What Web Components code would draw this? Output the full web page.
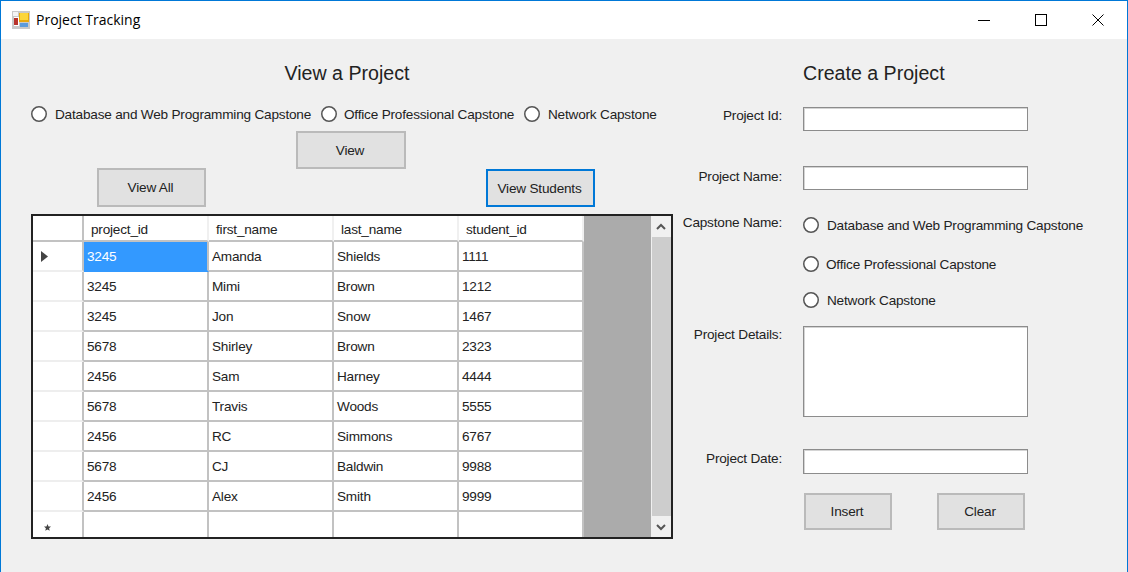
<!DOCTYPE html>
<html>
<head>
<meta charset="utf-8">
<title>Project Tracking</title>
<style>
html, body { margin: 0; height: 100%; overflow: hidden; }
body { font: 13.6px "Liberation Sans", Arial, sans-serif; letter-spacing: -0.2px; color: #222; }
</style>
</head>
<body>
<win-window>
  <win-titlebar slot="title">Project Tracking</win-titlebar>
  <view-panel></view-panel>
  <create-panel></create-panel>
</win-window>

<script>
const define = (name, css, html) => {
  const template = document.createElement('template')
  template.innerHTML = `<style>${css}</style>${html}`
  customElements.define(name, class extends HTMLElement {
    constructor() {
      super()
      this.attachShadow({ mode: 'open' })
      this.shadowRoot.append(template.content.cloneNode(true))
    }
  })
}

define('win-window', `
:host { display: block; height: 572px; box-sizing: border-box; background: #f0f0f0;
  border: 1px solid #0078d7; border-bottom: 0; }
.body { display: flex; align-items: flex-start; }
`, `
<slot name="title"></slot>
<div class="body"><slot></slot></div>
`)

define('win-titlebar', `
:host { display: flex; align-items: center; height: 38px; background: #fff; }
svg { display: block; }
.icon { margin-left: 11px; }
.text { margin-left: 6px; font: 14px "Open Sans", sans-serif; letter-spacing: 0; color: #000; flex: 1; padding-bottom: 1px; }
.btn { width: 57px; display: flex; justify-content: center; }
.btn:last-child { margin-right: 1px; }
`, `
<svg class="icon" width="18" height="18" viewBox="0 0 18 18">
  <rect width="18" height="18" fill="#c9c9c9"/>
  <rect x="1" y="1" width="5" height="4" fill="#f4f4f4"/>
  <rect x="2" y="6" width="5" height="9" fill="#fff"/>
  <rect x="2" y="7" width="4" height="7" fill="#b8332b"/>
  <rect x="7" y="2" width="10" height="9" fill="#e8a90c"/>
  <rect x="8" y="2" width="8" height="7" fill="#fcd63c"/>
  <rect x="8" y="12" width="8" height="4" fill="#5b9bdc"/>
</svg>
<div class="text"><slot></slot></div>
<div class="btn"><svg width="12" height="12"><path d="M0 6.500h12" stroke="#000"/></svg></div>
<div class="btn"><svg width="12" height="12"><rect x=".5" y=".5" width="11" height="11" fill="none" stroke="#000"/></svg></div>
<div class="btn"><svg width="12" height="12"><path d="M.5.5l11 11M11.500.5l-11 11" stroke="#000" fill="none"/></svg></div>
`)

define('win-heading', `
:host { display: block; font: 19.6px/28px "Liberation Sans", sans-serif; letter-spacing: 0; color: #222; }
`, `<slot></slot>`)

define('win-button', `
:host { display: flex; align-items: center; justify-content: center; box-sizing: border-box;
  background: #e1e1e1; border: 2px solid #bababa; padding-right: 2px; color: #222; }
:host([focused]) { border-color: #0078d7; }
`, `<slot></slot>`)

define('win-radio', `
:host { display: flex; align-items: center; height: 20px; white-space: nowrap; }
svg { display: block; flex: none; margin-right: var(--radio-gap, 8px); }
`, `<svg width="16" height="16"><circle cx="8" cy="8" r="7.250" fill="#fff" stroke="#555" stroke-width="1.500"/></svg><slot></slot>`)

define('win-input', `
:host { display: block; width: 225px; height: 24px; }
input { display: block; width: 100%; height: 100%; box-sizing: border-box; margin: 0; padding: 1px;
  border: 1px solid #8c8c8c; box-shadow: inset 1px 1px 0 #d4d4d4; background: #fff; border-radius: 0; outline: 0; }
`, `<input type="text">`)

define('win-memo', `
:host { display: block; width: 225px; height: 91px; }
textarea { display: block; width: 100%; height: 100%; box-sizing: border-box; margin: 0; padding: 1px;
  border: 1px solid #8c8c8c; box-shadow: inset 1px 1px 0 #d4d4d4; background: #fff; border-radius: 0; resize: none; outline: 0; overflow: hidden; }
`, `<textarea></textarea>`)

define('win-field', `
:host { display: grid; grid-template-columns: 108px auto; column-gap: 21px; }
.label { text-align: right; padding-top: var(--label-top, 1px); line-height: 16px; white-space: nowrap; }
`, `<div class="label"><slot name="label"></slot></div><div><slot></slot></div>`)

const columns = ['project_id', 'first_name', 'last_name', 'student_id']
const rows = [
  ['3245', 'Amanda', 'Shields', '1111'],
  ['3245', 'Mimi', 'Brown', '1212'],
  ['3245', 'Jon', 'Snow', '1467'],
  ['5678', 'Shirley', 'Brown', '2323'],
  ['2456', 'Sam', 'Harney', '4444'],
  ['5678', 'Travis', 'Woods', '5555'],
  ['2456', 'RC', 'Simmons', '6767'],
  ['5678', 'CJ', 'Baldwin', '9988'],
  ['2456', 'Alex', 'Smith', '9999'],
]

const arrow = '<svg width="7" height="11"><path d="M0 0l7 5.500-7 5.500z" fill="#444"/></svg>'
const star = '<svg width="7" height="7" viewBox="0 0 7 7"><path d="M3.500 0l1 2.400 2.500.2-1.900 1.700.6 2.500-2.200-1.300L1.300 6.800l.6-2.500L0 2.600l2.500-.2z" fill="#444"/></svg>'
const cell = (text, cls = '') => `<div class="${cls}">${text}</div>`

define('data-grid', `
:host { display: flex; width: 642px; height: 325px; box-sizing: border-box; border: 2px solid #222; background: #ababab; }
.table { display: grid; grid-template-columns: 51px repeat(4, 125px); grid-template-rows: 26px repeat(9, 30px) 25px;
  align-self: flex-start; background: #fff; }
.table > div { box-sizing: border-box; border-right: 2px solid #c2c2c2; border-bottom: 2px solid #c2c2c2;
  padding-left: 3px; line-height: 30px; white-space: nowrap; overflow: hidden; background: #fff; color: #222; }
.table > .head { border-right-color: #f0f0f0; padding-left: 7px; line-height: 27px; }
.table > .side { border-bottom-color: #eee; display: flex; align-items: center; padding: 0 0 0 8px; }
.table > .side.new { align-items: flex-end; padding: 0 0 6px 11px; border-bottom: 0; }
.table > .new-row { border-bottom: 0; }
.table > .corner { border-right-color: #c2c2c2; }
.table > .sel { background: #3399ff; color: #fff; border-bottom-color: #3399ff; }
.gap { width: 67px; }
.scroll { width: 20px; display: flex; flex-direction: column; align-items: center; background: #f0f0f0; }
.scroll svg { display: block; flex: none; margin: 7px 0 6px; }
.thumb { flex: 1; width: 19px; background: #cdcdcd; }
`, `
<div class="table">
  ${cell('', 'head corner')}${columns.map(c => cell(c, 'head')).join('')}
  ${rows.map((r, i) => cell(i ? '' : arrow, 'side') + r.map((v, j) => cell(v, !i && !j ? 'sel' : '')).join('')).join('')}
  ${cell(star, 'side new')}${columns.map(() => cell('', 'new-row')).join('')}
</div>
<div class="gap"></div>
<div class="scroll">
  <svg width="10" height="8"><path d="M1 6l4-4 4 4" fill="none" stroke="#555" stroke-width="2"/></svg>
  <div class="thumb"></div>
  <svg width="10" height="8"><path d="M1 2l4 4 4-4" fill="none" stroke="#555" stroke-width="2"/></svg>
</div>
`)

define('view-panel', `
:host { display: block; width: 673px; flex: none; box-sizing: border-box; padding: 20px 0 0 30px; }
win-heading { width: 632px; text-align: center; }
.radios { display: grid; grid-template-columns: 290px 203px auto; margin-top: 17px; }
.view { width: 110px; height: 38px; margin: 7px 0 0 265px; }
.actions { display: flex; margin: -1px 0 0 66px; }
.all { width: 109px; height: 39px; }
.students { width: 109px; height: 38px; margin: 1px 0 0 280px; }
data-grid { margin-top: 7px; }
`, `
<win-heading>View a Project</win-heading>
<div class="radios">
  <win-radio>Database and Web Programming Capstone</win-radio>
  <win-radio style="--radio-gap:7px">Office Professional Capstone</win-radio>
  <win-radio>Network Capstone</win-radio>
</div>
<win-button class="view">View</win-button>
<div class="actions">
  <win-button class="all">View All</win-button>
  <win-button class="students" focused>View Students</win-button>
</div>
<data-grid></data-grid>
`)

define('create-panel', `
:host { display: block; flex: 1; padding-top: 20px; }
win-heading { margin-left: 129px; }
.id { margin-top: 20px; }
.name { margin-top: 35px; --label-top: 3px; }
.capstone { margin-top: 25px; --label-top: 0px; }
.details { margin-top: 16px; }
.date { margin-top: 32px; --label-top: 2px; }
.date win-input { height: 25px; }
.group win-radio:nth-child(2) { margin-top: 19px; --radio-gap: 7px; }
.group win-radio:nth-child(3) { margin-top: 16px; }
.buttons { display: flex; margin: 19px 0 0 130px; }
.buttons win-button { width: 88px; height: 37px; }
.buttons win-button + win-button { margin-left: 45px; }
`, `
<win-heading>Create a Project</win-heading>
<win-field class="id"><span slot="label">Project Id:</span><win-input></win-input></win-field>
<win-field class="name"><span slot="label">Project Name:</span><win-input></win-input></win-field>
<win-field class="capstone"><span slot="label">Capstone Name:</span>
  <div class="group">
    <win-radio>Database and Web Programming Capstone</win-radio>
    <win-radio>Office Professional Capstone</win-radio>
    <win-radio>Network Capstone</win-radio>
  </div>
</win-field>
<win-field class="details"><span slot="label">Project Details:</span><win-memo></win-memo></win-field>
<win-field class="date"><span slot="label">Project Date:</span><win-input></win-input></win-field>
<div class="buttons">
  <win-button>Insert</win-button>
  <win-button>Clear</win-button>
</div>
`)
</script>
</body>
</html>
